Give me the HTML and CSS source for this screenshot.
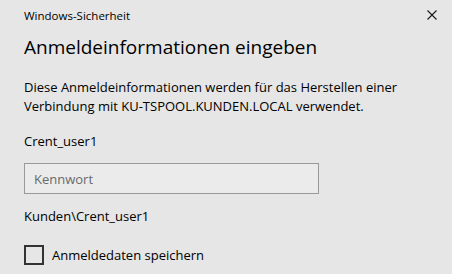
FILE: index.html
```html
<!DOCTYPE html>
<html lang="de">
<head>
<meta charset="utf-8">
<link rel="stylesheet" href="styles.css">
</head>
<body>
<div class="dialog">
  <div class="titlebar">
    <span class="app">Windows-Sicherheit</span>
    <svg class="close" width="10" height="10" viewBox="0 0 10 10"><path d="M0.5 0.5L9.5 9.5M9.5 0.5L0.5 9.5" stroke="#1a1a1a" stroke-width="1.1"/></svg>
  </div>
  <h1 class="heading">Anmeldeinformationen eingeben</h1>
  <p class="desc">Diese Anmeldeinformationen werden für das Herstellen einer Verbindung mit KU-TSPOOL.KUNDEN.LOCAL verwendet.</p>
  <div class="user">Crent_user1</div>
  <div class="field"><span class="placeholder">Kennwort</span></div>
  <div class="domain">Kunden\Crent_user1</div>
  <label class="check"><span class="box"></span><span class="label">Anmeldedaten speichern</span></label>
</div>
</body>
</html>
```
FILE: styles.css
```css
html, body {
  margin: 0;
  padding: 0;
  background: #e6e6e6;
}
body {
  font-family: "Open Sans", "Noto Sans", sans-serif;
  color: #000;
  width: 452px;
  height: 274px;
  overflow: hidden;
}
.dialog {
  padding: 0 0 0 24px;
}
.titlebar {
  display: flex;
  justify-content: space-between;
  align-items: center;
  height: 30px;
  padding-right: 15px;
  font-size: 11.5px;
}
.close {
  display: block;
}
.heading {
  margin: 3px 0 0;
  font-weight: 400;
  font-size: 19px;
  line-height: 28px;
}
.desc {
  margin: 17px 0 0;
  font-size: 13px;
  line-height: 19px;
  width: 410px;
}
.user {
  margin-top: 16px;
  font-size: 13px;
  line-height: 19px;
}
.field {
  margin-top: 12px;
  width: 284px;
  height: 29px;
  border: 1px solid #999;
  background: #ebebeb;
  display: flex;
  align-items: center;
  padding-left: 9px;
}
.placeholder {
  font-size: 13px;
  color: #6a6a6a;
}
.domain {
  margin-top: 13px;
  font-size: 13px;
  line-height: 19px;
}
.check {
  display: flex;
  align-items: center;
  margin-top: 19px;
  font-size: 13px;
}
.box {
  width: 16px;
  height: 16px;
  border: 2px solid #333;
  margin-right: 8px;
}
```
